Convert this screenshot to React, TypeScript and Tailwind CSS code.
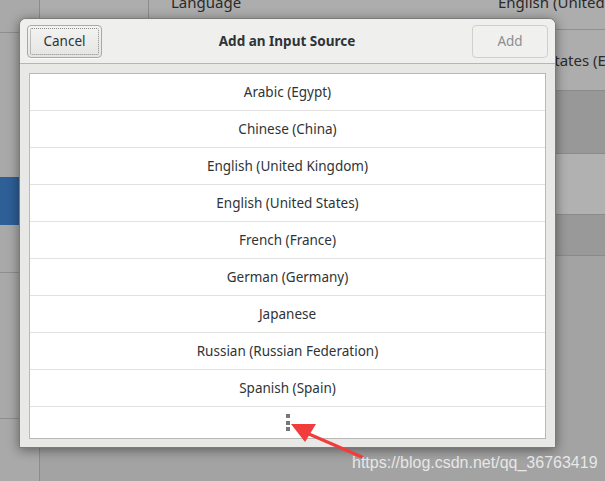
import React from 'react';

// fondo: ventana de Configuración atenuada detrás del diálogo
const Fondo: React.FC = () => (
    <div className="flex h-full w-full text-[15px] text-[#2a2a2a]">
        <div className="flex w-[40px] shrink-0 flex-col border-r border-[#8c8c8c] bg-[#a9a9a9]">
            <div className="h-[33px] border-b border-[#8e8e8e]" />
            <div className="h-[144px]" />
            <div className="h-[48px] bg-[#2e5f96]" />
            <div className="h-[48px] border-b border-[#8e8e8e]" />
            <div className="h-[146px] border-b border-[#8e8e8e]" />
            <div className="flex-1" />
        </div>
        <div className="flex min-w-0 flex-1 flex-col overflow-hidden bg-[#a3a3a3]">
            <div className="flex h-[30px] shrink-0 border-b border-[#909090] bg-[#adadad]">
                <div className="w-[109px] shrink-0 border-r border-[#8c8c8c]" />
                <div className="-mt-[9px] w-[349px] shrink-0 pl-[22px]">Language</div>
                <div className="-mt-[9px] shrink-0 whitespace-nowrap">English (United States)</div>
            </div>
            <div className="flex h-[61px] shrink-0 items-center border-b border-[#8a8a8a] bg-[#adadad]">
                <div className="ml-[506px] shrink-0 whitespace-nowrap">States (English)</div>
            </div>
            <div className="h-[63px] shrink-0 border-b border-[#8a8a8a] bg-[#989898]" />
            <div className="h-[61px] shrink-0 border-b border-[#8a8a8a] bg-[#b1b1b1]" />
            <div className="h-[41px] shrink-0 border-b border-[#8a8a8a] bg-[#999999]" />
            <div className="flex-1" />
        </div>
    </div>
);

const idiomas = [
    'Arabic (Egypt)',
    'Chinese (China)',
    'English (United Kingdom)',
    'English (United States)',
    'French (France)',
    'German (Germany)',
    'Japanese',
    'Russian (Russian Federation)',
    'Spanish (Spain)',
];

const Dialogo: React.FC = () => (
    <div className="absolute left-[19px] top-[18px] flex h-[430px] w-[537px] flex-col overflow-hidden rounded-t-[7px] border border-[#7b7b7b] bg-[#e8e8e7] shadow-[0_2px_12px_rgba(0,0,0,0.45)]">
        <div className="flex h-[45px] items-center border-b border-[#b6b6b3] bg-[#efefee] px-[7px]">
            <button className="flex h-[33px] w-[75px] items-center justify-center rounded-[4px] border border-[#a8a8a5] bg-gradient-to-b from-[#f4f4f3] to-[#e4e4e2] shadow-[0_1px_0_rgba(255,255,255,0.8)]">
                <span className="flex h-[27px] w-[69px] items-center justify-center rounded-[2px] border border-dotted border-[#8a8a8a] text-[#2e3436]">
                    Cancel
                </span>
            </button>
            <div className="flex-1 text-center font-bold text-[#2e3436]">Add an Input Source</div>
            <button className="flex h-[33px] w-[76px] items-center justify-center rounded-[4px] border border-[#cfcfcc] bg-[#f0f0ef] text-[#8b8e8f]">
                Add
            </button>
        </div>
        <div className="flex-1 px-[9px] pb-[8px] pt-[9px]">
            <div className="flex h-full flex-col border border-[#b9b9b6] bg-white">
                {idiomas.map((nombre) => (
                    <div key={nombre} className="flex h-[37px] shrink-0 items-center justify-center border-b border-[#e2e2e0] text-[#2e3436]">
                        {nombre}
                    </div>
                ))}
                <div className="flex flex-1 items-center justify-center">
                    <div className="flex flex-col gap-[2.5px]">
                        <span className="h-[4px] w-[4px] bg-[#777777]" />
                        <span className="h-[4px] w-[4px] bg-[#777777]" />
                        <span className="h-[4px] w-[4px] bg-[#777777]" />
                    </div>
                </div>
            </div>
        </div>
    </div>
);

const App: React.FC = () => (
    <div
        className="relative h-[481px] w-[605px] overflow-hidden text-[13.5px]"
        style={{ fontFamily: '"Noto Sans", "Open Sans", sans-serif' }}
    >
        <Fondo />
        <Dialogo />
        {/* flecha roja */}
        <svg className="absolute left-0 top-0" width="605" height="481" viewBox="0 0 605 481">
            <line x1="362" y1="457" x2="302" y2="431" stroke="#f23b3b" strokeWidth="3" strokeLinecap="round" />
            <polygon points="291,424 316,424 305,442" fill="#f23b3b" />
        </svg>
        <div
            className="absolute left-[352px] top-[451px] whitespace-nowrap text-[16px] text-white/75"
            style={{ fontFamily: '"Liberation Sans", Arial, sans-serif' }}
        >
            https://blog.csdn.net/qq_36763419
        </div>
    </div>
);

export default App;
